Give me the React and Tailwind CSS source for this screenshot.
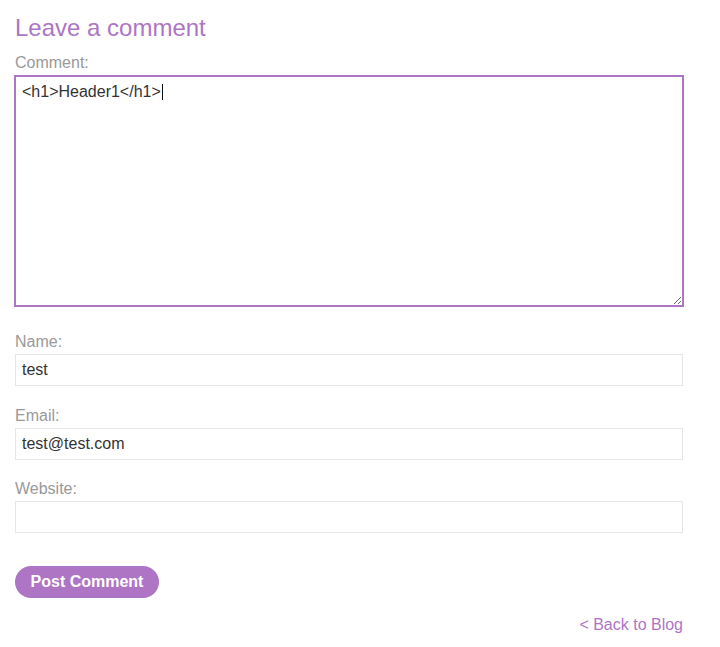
import React from 'react'

const purple = 'text-[#ae75c5]'

const Field = ({ label, value, top }) => (
  <div className={top}>
    <label className="block leading-5 text-[#999]">{label}</label>
    <input
      type="text"
      defaultValue={value}
      className="mt-[2px] block h-[32px] w-full border border-[#e6e6e6] bg-white px-[6px] text-base leading-5 text-[#333] outline-none"
      style={{ fontFamily: 'inherit' }}
    />
  </div>
)

export default function App() {
  return (
    <div
      className="min-h-[647px] bg-white pt-[14px]"
      style={{ fontFamily: '"Liberation Sans", Arial, sans-serif' }}
    >
      <div className="ml-[15px] w-[668px] text-base">
        <h2 className={`h-[28px] text-[24px] leading-[28px] ${purple}`}>Leave a comment</h2>

        <label className="mt-[11px] block leading-5 text-[#999]">Comment:</label>
        <div className="mt-[3px] h-[230px] w-full resize overflow-auto border border-[#ae75c5] bg-white pl-[6px] pt-[4px] leading-5 text-[#333] outline outline-1 outline-[#ae75c5]">
          {'<h1>Header1</h1>'}
          <span className="ml-px inline-block h-[16px] w-px translate-y-[3px] bg-[#111]" />
        </div>

        <Field label="Name:" value="test" top="mt-[26px]" />
        <Field label="Email:" value="test@test.com" top="mt-[20px]" />
        <Field label="Website:" value="" top="mt-[19px]" />

        <button className="mt-[33px] h-[32px] w-[144px] rounded-full bg-[#ae75c5] text-base font-bold leading-5 text-white">
          Post Comment
        </button>

        <div className="mt-[17px] text-right leading-5">
          <a href="#" className={purple}>{'< Back to Blog'}</a>
        </div>
      </div>
    </div>
  )
}
